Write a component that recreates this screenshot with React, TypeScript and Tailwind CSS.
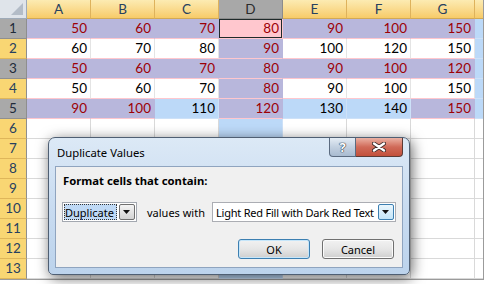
import { FC } from "react";

type Kind = "L" | "P" | "W" | "B";

const COLS = ["A", "B", "C", "D", "E", "F", "G"];

const ROWS: { vals: number[]; kinds: Kind[]; sel: boolean }[] = [
  { vals: [50, 60, 70, 80, 90, 100, 150], kinds: ["L", "L", "L", "P", "L", "L", "L"], sel: true },
  { vals: [60, 70, 80, 90, 100, 120, 150], kinds: ["W", "W", "W", "L", "W", "W", "W"], sel: false },
  { vals: [50, 60, 70, 80, 90, 100, 120], kinds: ["L", "L", "L", "L", "L", "L", "L"], sel: true },
  { vals: [50, 60, 70, 80, 90, 100, 150], kinds: ["W", "W", "W", "L", "W", "W", "W"], sel: false },
  { vals: [90, 100, 110, 120, 130, 140, 150], kinds: ["L", "L", "B", "L", "B", "B", "L"], sel: true },
];

const cellStyle: Record<Kind, string> = {
  L: "bg-[#b8b7dc] text-[#9c0006] border-r-[#b8b7dc] border-b-[#ffc7ce]",
  P: "bg-[#ffc7ce] text-[#9c0006] border-r-[#ffc7ce] border-b-[#ffc7ce] ring-1 ring-inset ring-[#1f2a2a]",
  W: "bg-white text-black border-r-[#e4e4e4] border-b-[#ffc7ce]",
  B: "bg-[#bcd9f8] text-black border-r-[#cde1f8] border-b-[#cde1f8]",
};

const RowHeader: FC<{ n: number; sel: boolean }> = ({ n, sel }) => (
  <div
    className={
      "w-[27px] h-5 shrink-0 flex items-center justify-center border-r border-b border-r-[#8e8e8e] " +
      (sel
        ? "bg-[#a9a9a9] text-[#1f2b3a] border-b-[#8f8f8f]"
        : "bg-[#f9d673] text-[#27415f] border-b-[#dfb65a]")
    }
  >
    {n}
  </div>
);

const Sheet: FC = () => (
  <div className="w-[484px] h-[280px] border-r border-b border-[#9b9b9b] overflow-hidden flex flex-col font-['Lato',sans-serif] text-[13.5px]">
    {/* column headers */}
    <div className="flex h-[19px] shrink-0">
      <div className="w-[27px] h-[19px] shrink-0 bg-[#dfe4ea] border-r border-b border-[#9eaab8] flex items-end justify-end p-[3px]">
        <div className="w-0 h-0 border-l-[12px] border-l-transparent border-b-[12px] border-b-[#b3bcc7]" />
      </div>
      {COLS.map((c) => (
        <div
          key={c}
          className={
            "w-16 h-[19px] shrink-0 flex items-center justify-center border-r border-b " +
            (c === "D"
              ? "bg-[#a8a8a8] text-[#2b2b2b] border-[#8c8c8c]"
              : "bg-linear-to-b from-[#fcebb2] to-[#f7cb68] text-[#27415f] border-r-[#deb25c] border-b-[#d2a955]")
          }
        >
          {c}
        </div>
      ))}
      <div className="flex-1 h-[19px] bg-linear-to-b from-[#fcebb2] to-[#f7cb68] border-b border-[#d2a955]" />
    </div>

    {/* data rows */}
    {ROWS.map((r, i) => (
      <div key={i} className="flex h-5 shrink-0">
        <RowHeader n={i + 1} sel={r.sel} />
        {r.vals.map((v, j) => (
          <div
            key={j}
            className={
              "w-16 h-5 shrink-0 flex items-center justify-end pr-[3px] border-r border-b " +
              cellStyle[r.kinds[j]]
            }
          >
            {v}
          </div>
        ))}
        <div className="flex-1 h-5 bg-[#bcd9f8] border-b border-[#cde1f8]" />
      </div>
    ))}

    {/* empty rows */}
    {[6, 7, 8, 9, 10, 11, 12, 13].map((n) => (
      <div key={n} className="flex h-5 shrink-0">
        <RowHeader n={n} sel={false} />
        {COLS.map((c) => (
          <div
            key={c}
            className={
              "w-16 h-5 shrink-0 border-r border-b " +
              (c === "D" ? "bg-[#bcd9f8] border-[#cde1f8]" : "bg-white border-[#d9d9d9]")
            }
          />
        ))}
        <div className="flex-1 h-5 bg-white border-b border-[#d9d9d9]" />
      </div>
    ))}
  </div>
);

const Arrow: FC = () => (
  <svg width="8" height="5" viewBox="0 0 8 5">
    <path d="M0 0 H7 L3.5 4 Z" fill="#111" />
  </svg>
);

const Dialog: FC = () => (
  <div className="absolute left-[48px] top-[137px] w-[362px] h-[138px] rounded-t-[7px] rounded-b-[5px] border border-[#4f5f73] bg-linear-to-b from-[#dce9f6] via-[#c9dcf1] to-[#bcd3ec] shadow-[2px_3px_14px_rgba(0,0,0,0.6)] font-['Noto_Sans',sans-serif] text-[11px] text-black flex flex-col whitespace-nowrap">
    {/* title bar */}
    <div className="h-[28px] flex items-start justify-between pl-[8px] pr-[6px]">
      <span className="mt-[7px] leading-[16px] text-[11.3px]">Duplicate Values</span>
      <div className="flex">
        <div className="w-[27px] h-[19px] flex items-center justify-center rounded-bl-[4px] border border-t-0 border-[#5b6b80] bg-linear-to-b from-[#e4ecf4] via-[#c2d0e0] to-[#a9bbd0] text-white font-bold text-[13px] leading-none [text-shadow:0_0_1px_#263445,0_0_1px_#263445,0_0_1px_#263445]">
          ?
        </div>
        <div className="w-[47px] h-[19px] flex items-center justify-center rounded-br-[4px] border border-t-0 border-l-0 border-[#5b3b36] bg-linear-to-b from-[#eab1a4] via-[#d06a58] to-[#c2503b]">
          <svg width="14" height="10" viewBox="0 0 14 10">
            <path d="M2 1.5 L12 8.5 M12 1.5 L2 8.5" stroke="#3a2a28" strokeWidth="4" strokeLinecap="round" />
            <path d="M2 1.5 L12 8.5 M12 1.5 L2 8.5" stroke="#ffffff" strokeWidth="2.4" strokeLinecap="round" />
          </svg>
        </div>
      </div>
    </div>

    {/* client area */}
    <div className="mx-[6px] h-[102px] border border-[#8fa4bf] bg-[#f0f0f0] flex flex-col">
      <div className="pl-[7px] pt-[6px] leading-[16px] font-bold text-[11.3px]">Format cells that contain:</div>

      <div className="flex items-center mt-[13px] pl-[6px] h-5">
        <div className="w-[75px] h-5 border border-[#a3a8b0] bg-white flex items-center p-px gap-px">
          <span className="w-[53px] h-4 flex items-center pl-px bg-[#bfd9f5] outline outline-1 outline-dotted outline-[#333] -outline-offset-1 leading-none">
            Duplicate
          </span>
          <span className="w-[16px] h-4 ml-auto flex items-center justify-center border border-[#707070] rounded-[2px] bg-linear-to-b from-[#f4f4f4] to-[#d3d3d3]">
            <Arrow />
          </span>
        </div>
        <span className="w-[75px] pl-[10px] leading-none">values with</span>
        <div className="w-[184px] h-5 border border-[#abadb3] bg-white flex items-center p-px">
          <span className="pl-[2px] leading-none tracking-[-0.22px]">Light Red Fill with Dark Red Text</span>
          <span className="w-[16px] h-4 ml-auto flex items-center justify-center border border-[#3c7fb1] rounded-[2px] bg-linear-to-b from-[#eaf6fd] to-[#c4e5f8]">
            <Arrow />
          </span>
        </div>
      </div>

      <div className="flex justify-end gap-[12px] pr-[8px] mt-[17px]">
        <button className="w-[72px] h-5 rounded-[3px] border border-[#3c7fb1] bg-linear-to-b from-[#f2f2f2] via-[#e6e6e6] to-[#cfcfcf] shadow-[inset_0_0_0_1px_#c6e6fa] leading-none">
          OK
        </button>
        <button className="w-[72px] h-5 rounded-[3px] border border-[#707070] bg-linear-to-b from-[#f2f2f2] via-[#e6e6e6] to-[#cfcfcf] shadow-[inset_0_0_0_1px_#fbfbfb] leading-none">
          Cancel
        </button>
      </div>
    </div>
  </div>
);

export default function App() {
  return (
    <div className="w-[487px] h-[284px] relative overflow-hidden bg-white">
      <Sheet />
      <Dialog />
    </div>
  );
}
